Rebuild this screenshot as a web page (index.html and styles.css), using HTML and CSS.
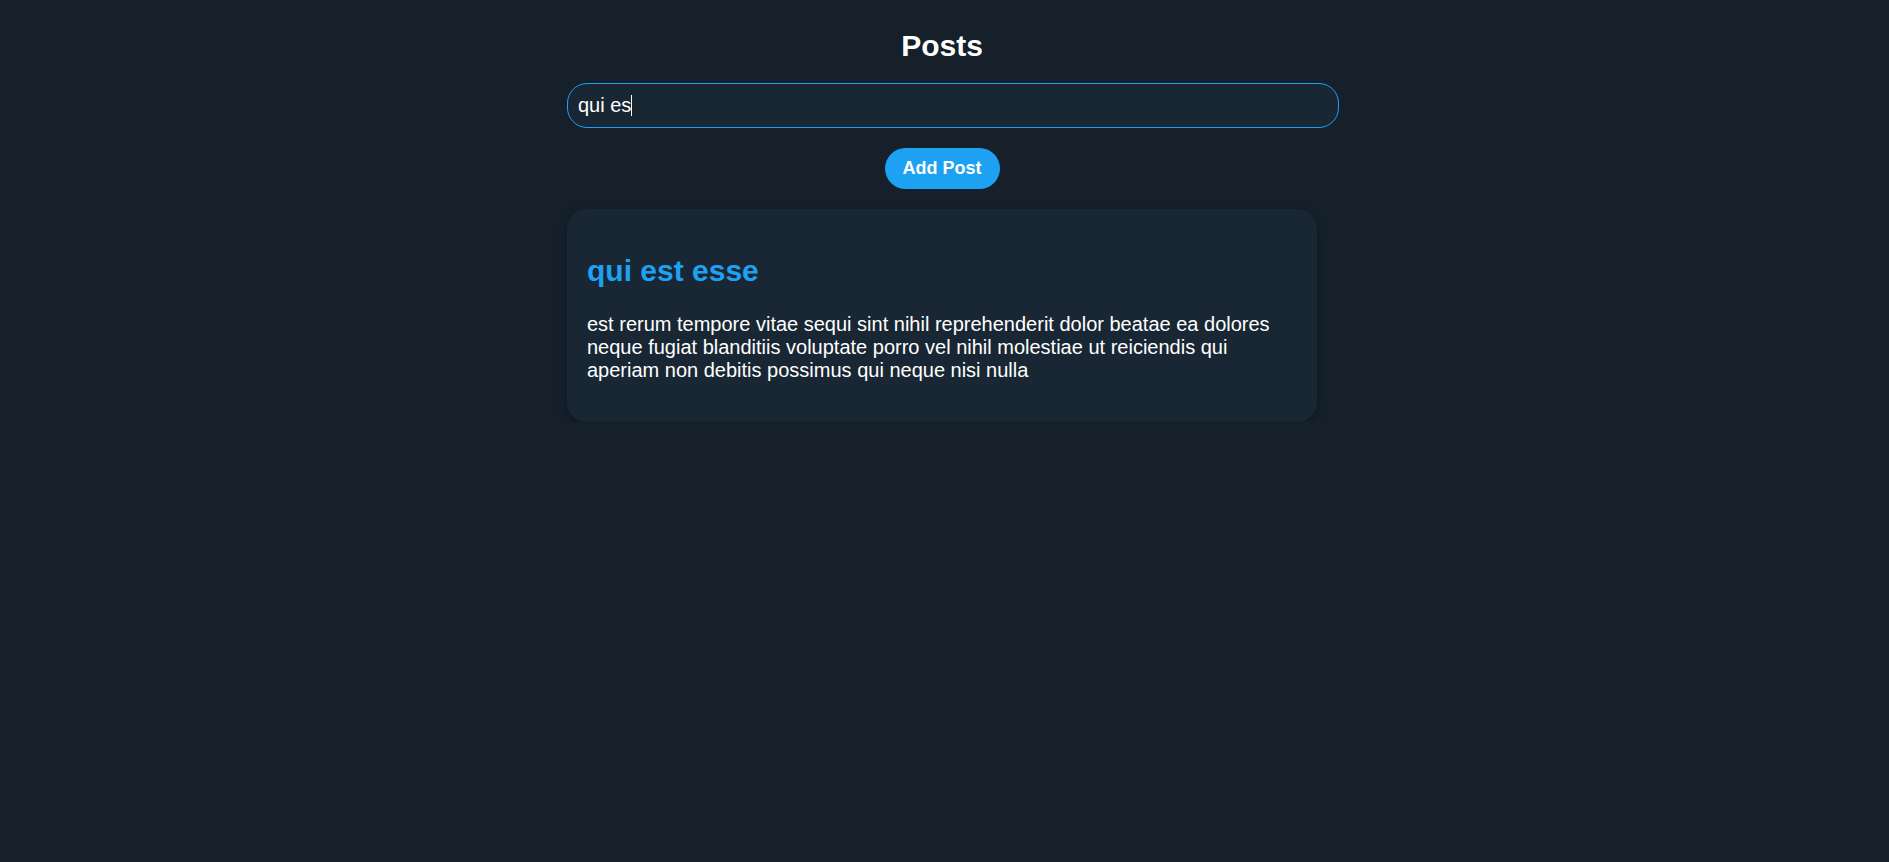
FILE: index.html
```html
<!DOCTYPE html>
<html lang="en">
<head>
<meta charset="utf-8">
<title>Posts</title>
<link rel="stylesheet" href="styles.css">
</head>
<body>
<div class="container">
  <h1 class="page-title">Posts</h1>
  <div class="search-wrap">
    <input class="search" type="text" value="qui es" autofocus>
    <span class="fake-caret"></span>
  </div>
  <div class="actions">
    <button class="add-btn" type="button">Add Post</button>
  </div>
  <div class="post-card">
    <h2 class="post-title">qui est esse</h2>
    <p class="post-body">est rerum tempore vitae sequi sint nihil reprehenderit dolor beatae ea dolores neque fugiat blanditiis voluptate porro vel nihil molestiae ut reiciendis qui aperiam non debitis possimus qui neque nisi nulla</p>
  </div>
</div>
</body>
</html>
```

FILE: styles.css
```css
html, body {
  background: #15202b;
}
body {
  margin: 8px;
  padding-right: 5px;
  font-family: "Liberation Sans", Arial, sans-serif;
  color: #ffffff;
}
.container {
  width: 750px;
  margin: 0 auto;
}
.page-title {
  font-size: 30px;
  font-weight: bold;
  text-align: center;
  margin: 21px 0 20px;
  line-height: normal;
}
.search-wrap {
  position: relative;
}
.search {
  display: block;
  width: 100%;
  box-sizing: content-box;
  padding: 10px;
  margin: 0;
  border: 1px solid #1da1f2;
  border-radius: 20px;
  background: #192734;
  color: #ffffff;
  font-family: "Liberation Sans", Arial, sans-serif;
  font-size: 20px;
  line-height: 23px;
  outline: none;
  caret-color: transparent;
}
.fake-caret {
  position: absolute;
  left: 64px;
  top: 12px;
  width: 1px;
  height: 21px;
  background: #ffffff;
}
.actions {
  display: flex;
  justify-content: center;
  margin: 20px 0 20px;
}
.add-btn {
  background: #1da1f2;
  color: #ffffff;
  border: none;
  border-radius: 21px;
  padding: 10px 18px;
  font-family: "Liberation Sans", Arial, sans-serif;
  font-size: 18px;
  font-weight: bold;
  line-height: 21px;
  cursor: pointer;
}
.post-card {
  background: #192734;
  border-radius: 20px;
  padding: 20px;
  box-shadow: 0 4px 12px rgba(0, 0, 0, 0.25);
  font-size: 20px;
  display: flow-root;
}
.post-title {
  color: #1da1f2;
  font-size: 30px;
  font-weight: bold;
  margin: 25px 0;
  line-height: normal;
}
.post-body {
  margin: 0 0 20px;
  line-height: normal;
}
```
